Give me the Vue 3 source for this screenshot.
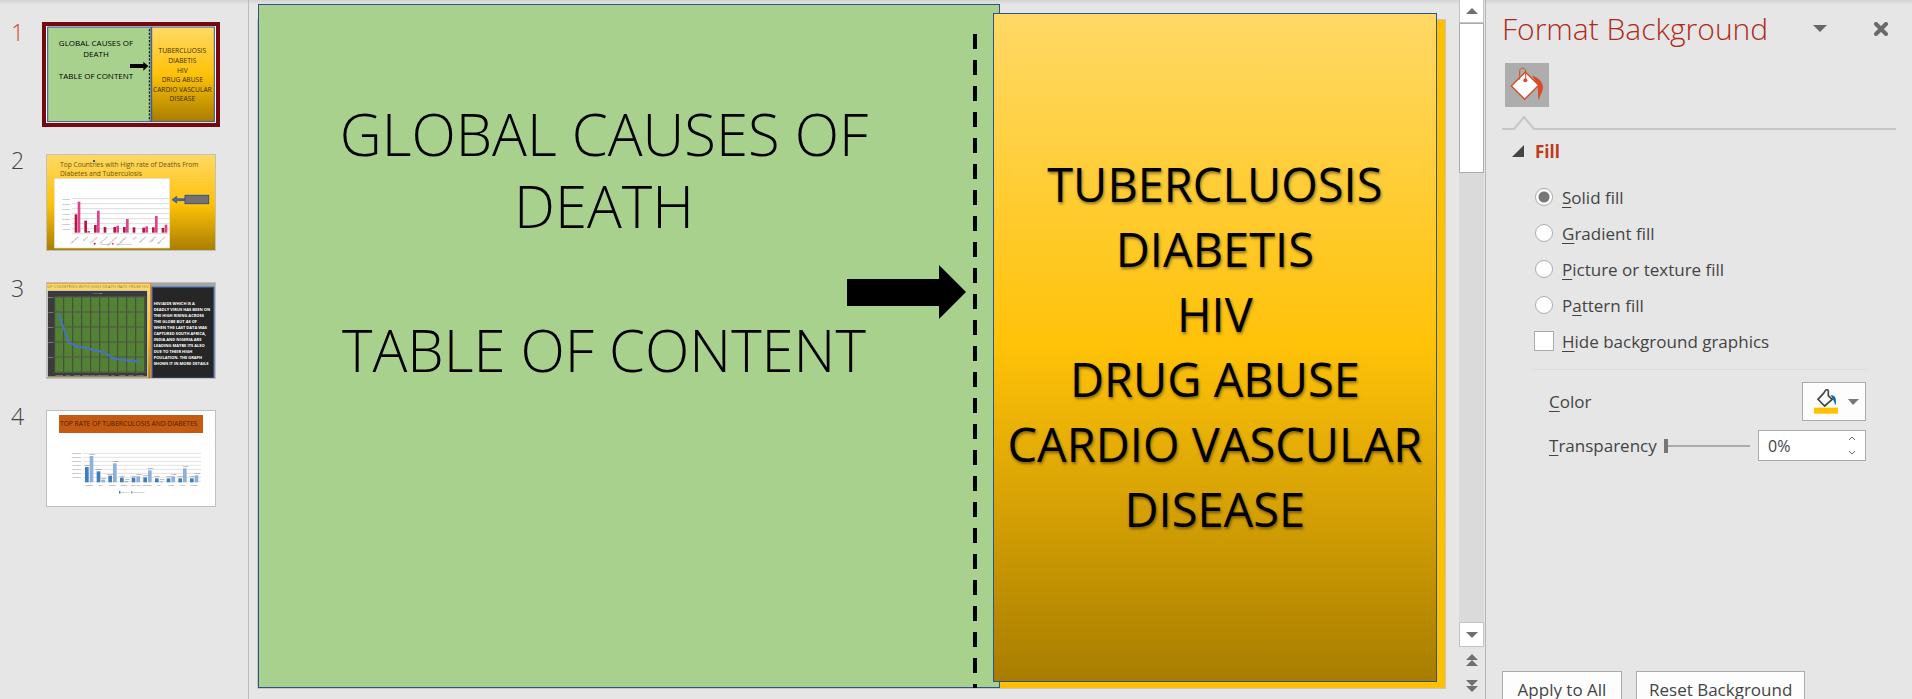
<script setup>
import { ref } from 'vue'

const selected = ref(1)
const fill = ref('solid')
const hideGraphics = ref(false)
const transparency = ref(0)

const fills = [
  { id: 'solid', before: '', key: 'S', after: 'olid fill' },
  { id: 'gradient', before: '', key: 'G', after: 'radient fill' },
  { id: 'picture', before: '', key: 'P', after: 'icture or texture fill' },
  { id: 'pattern', before: 'P', key: 'a', after: 'ttern fill' },
]

const topics = ['TUBERCLUOSIS', 'DIABETIS', 'HIV', 'DRUG ABUSE', 'CARDIO VASCULAR', 'DISEASE']
const topicLines = [82, 112, 142, 169, 198, 226]

const barsTwo = [
  [55, 93], [36, 5], [23, 66], [17, 0], [17, 21], [17, 41], [16, 0], [15, 19], [16, 50], [14, 24],
]
const barsFour = [
  [46, 79], [33, 8], [20, 57], [14, 4], [14, 18], [15, 36], [12, 3], [12, 18], [12, 42], [12, 21],
]
const countries = ['Indonesia', 'Brazil', 'Pakistan', 'Germany', 'South Africa', 'Bangladesh', 'Italy', 'Vietnam', 'Nigeria', 'Myanmar']

const hivNote = [
  'HIV/AIDS WHICH IS A',
  'DEADLY VIRUS HAS BEEN ON',
  'THE HIGH RISING ACROSS',
  'THE GLOBE BUT AS OF',
  'WHEN THE LAST DATA WAS',
  'CAPTURED SOUTH AFRICA,',
  'INDIA AND NIGERIA ARE',
  'LEADING MAYBE ITS ALSO',
  'DUE TO THEIR HIGH',
  'POULATION. THE GRAPH',
  'SHOWS IT IN MORE DETAILS',
]

function step(delta) {
  transparency.value = Math.min(100, Math.max(0, Number(transparency.value) + delta))
}
</script>

<template>
  <div class="workspace">
    <nav class="slides" aria-label="Slides">
      <button
        v-for="n in 4"
        :key="n"
        class="slide-item"
        :class="{ selected: selected === n }"
        type="button"
        @click="selected = n"
      >
        <span class="slide-number">{{ n }}</span>
        <span class="frame">
          <svg v-if="n === 1" viewBox="0 0 510 291" class="thumb">
            <defs>
              <linearGradient id="goldOne" x1="0" y1="0" x2="0" y2="1">
                <stop offset="0" stop-color="#ffd966" />
                <stop offset=".5" stop-color="#ffc208" />
                <stop offset="1" stop-color="#a87d00" />
              </linearGradient>
            </defs>
            <rect width="510" height="291" fill="#fff" />
            <rect x="5" y="3" width="310" height="284" fill="#a9d18e" stroke="#2f528f" stroke-width="3" />
            <rect x="317" y="3" width="188" height="284" fill="url(#goldOne)" stroke="#2f528f" stroke-width="3" />
            <path d="M310 9V285" stroke="#000" stroke-width="3" stroke-dasharray="7 4" />
            <path d="M252 114h40v-7l15 13-15 14v-8h-40z" />
            <g class="t-title">
              <text x="150" y="59">GLOBAL CAUSES OF</text>
              <text x="150" y="92">DEATH</text>
              <text x="150" y="159">TABLE OF CONTENT</text>
            </g>
            <g class="t-topic">
              <text v-for="(t, i) in topics" :key="t" x="409" :y="topicLines[i]">{{ t }}</text>
            </g>
          </svg>

          <svg v-else-if="n === 2" viewBox="0 0 510 291" class="thumb outlined">
            <defs>
              <linearGradient id="goldTwo" x1="0" y1="0" x2="0" y2="1">
                <stop offset="0" stop-color="#ffd966" />
                <stop offset=".52" stop-color="#ffc208" />
                <stop offset="1" stop-color="#a87d00" />
              </linearGradient>
            </defs>
            <rect width="510" height="291" fill="url(#goldTwo)" />
            <text class="t-two" x="42" y="39">Top Countries with High rate of Deaths From</text>
            <text class="t-two" x="42" y="66">Diabetes and Tuberculosis</text>
            <rect x="141" y="18" width="6" height="6" fill="#2f55a5" />
            <rect x="25" y="74" width="346" height="208" fill="#fff" stroke="#e4dfd0" stroke-width="2" />
            <path v-for="i in 8" :key="i" :d="`M78 ${119 + i * 15}H369`" stroke="#dcdcdc" stroke-width="3" />
            <text v-for="i in 7" :key="'a' + i" class="t-axis" x="72" :y="124 + i * 15">{{ 8 - i }}00000</text>
            <g v-for="(b, i) in barsTwo" :key="'b' + i">
              <rect :x="86 + i * 29" :y="236 - b[0]" width="8" :height="b[0]" fill="#b5173f" />
              <rect :x="95 + i * 29" :y="236 - b[1]" width="8" :height="b[1]" fill="#df4390" />
              <text class="t-axis dark" :transform="`translate(${98 + i * 29} 250) rotate(-42)`">{{ countries[i] }}</text>
            </g>
            <circle cx="146" cy="269" r="3" fill="#b5173f" />
            <circle cx="200" cy="269" r="3" fill="#df4390" />
            <text class="t-axis" x="192" y="272">Diabetes</text>
            <text class="t-axis" x="256" y="272">Tuberculosis</text>
            <path d="M378 137l14-10v7h24v6h-24v7z" fill="#44699b" stroke="#2f528f" stroke-width="2" />
            <rect x="417" y="124" width="71" height="25" fill="#767171" stroke="#2f528f" stroke-width="3" />
          </svg>

          <svg v-else-if="n === 3" viewBox="0 0 510 291" class="thumb outlined">
            <defs>
              <linearGradient id="goldThree" x1="0" y1="0" x2="0" y2="1">
                <stop offset="0" stop-color="#ffd966" />
                <stop offset=".5" stop-color="#ffc208" />
                <stop offset="1" stop-color="#a87d00" />
              </linearGradient>
            </defs>
            <rect width="510" height="291" fill="#a5a5a5" />
            <rect x="0" y="3" width="314" height="288" fill="url(#goldThree)" stroke="#ed7d31" stroke-width="4" />
            <text class="t-three" x="3" y="17">OF COUNTRIES WITH HIGH DEATH RATE FROM HIV</text>
            <rect x="4" y="25" width="301" height="260" fill="#3b3b3b" stroke="#d9d9d9" stroke-width="3" />
            <rect x="26" y="44" width="272" height="228" fill="#548235" />
            <path v-for="i in 11" :key="'v' + i" :d="`M${i * 27 - 1} 44V272`" stroke="#404a3b" stroke-width="3" />
            <path v-for="i in 6" :key="'h' + i" :d="`M22 ${i * 45}H298`" stroke="#505050" stroke-width="3" />
            <text class="t-axis light" x="168" y="37">HIV/AIDS</text>
            <text v-for="i in 5" :key="'y' + i" class="t-axis light" x="21" :y="3 + i * 45">{{ 6 - i }}000</text>
            <text v-for="(c, i) in countries" :key="'c' + i" class="t-tiny" :x="39 + i * 27" y="281">{{ c }}</text>
            <path d="M37 93l31 88 27 13 25 3 27 9 28 4 27 19 27 5 28 3 25 2" fill="none" stroke="#4472c4" stroke-width="6" />
            <rect x="319" y="16" width="184" height="272" fill="#262626" stroke="#2f528f" stroke-width="4" />
            <text v-for="(line, i) in hivNote" :key="line" class="t-note" x="323" :y="70 + i * 18">{{ line }}</text>
          </svg>

          <svg v-else viewBox="0 0 510 291" class="thumb outlined">
            <rect width="510" height="291" fill="#fff" />
            <rect x="39" y="15" width="432" height="54" fill="#c55a11" />
            <text class="t-four" x="42" y="48">TOP RATE OF TUBERCULOSIS AND DIABETES</text>
            <path v-for="i in 8" :key="i" :d="`M112 ${118 + i * 12}H465`" stroke="#e2e2e2" stroke-width="3" />
            <text v-for="i in 7" :key="'a' + i" class="t-axis" x="105" :y="121 + i * 12">{{ 8 - i }}000000</text>
            <g v-for="(b, i) in barsFour" :key="'b' + i">
              <rect :x="117 + i * 35" :y="217 - b[0]" width="11" :height="b[0]" fill="#3d80bd" />
              <rect :x="131 + i * 35" :y="217 - b[1]" width="11" :height="b[1]" fill="#8eb0df" />
              <text class="t-tiny dark" :x="129 + i * 35" y="229">{{ countries[i] }}</text>
              <text class="t-tiny dark" :x="122 + i * 35" :y="214 - b[0]">{{ b[0] }}0000</text>
              <text class="t-tiny dark" :x="138 + i * 35" :y="214 - b[1]">{{ b[1] }}0000</text>
            </g>
            <rect x="219" y="243" width="4" height="8" fill="#3d80bd" />
            <rect x="255" y="243" width="4" height="8" fill="#8eb0df" />
            <text class="t-axis" x="249" y="250">Diabetes</text>
            <text class="t-axis" x="295" y="250">Tuberculosis</text>
          </svg>
        </span>
      </button>
    </nav>

    <main class="canvas">
      <div class="slide">
        <section class="shape green">
          <h1>GLOBAL CAUSES OF<br />DEATH<br /><br />TABLE OF CONTENT</h1>
        </section>
        <svg class="divider" aria-hidden="true"><line x1="2" y1="0" x2="2" y2="100%" /></svg>
        <svg class="arrow" viewBox="0 0 119 54" aria-hidden="true"><path d="M0 14H92V0L119 27 92 54V41H0z" /></svg>
        <section class="shape gold">
          <p v-for="t in topics" :key="t">{{ t }}</p>
        </section>
      </div>
    </main>

    <div class="scrollbar" aria-label="Slide scroll bar">
      <button class="sb up" type="button" aria-label="Scroll up">
        <svg viewBox="0 0 12 6"><path d="M6 0l6 6H0z" /></svg>
      </button>
      <div class="track"><div class="handle"></div></div>
      <button class="sb down" type="button" aria-label="Scroll down">
        <svg viewBox="0 0 12 6"><path d="M0 0h12L6 6z" /></svg>
      </button>
      <button class="jump" type="button" aria-label="Previous slide">
        <svg viewBox="0 0 12 12"><path d="M6 0l6 6H0zM6 6l6 6H0z" /></svg>
      </button>
      <button class="jump" type="button" aria-label="Next slide">
        <svg viewBox="0 0 12 12"><path d="M0 0h12L6 6zM0 6h12l-6 6z" /></svg>
      </button>
    </div>

    <aside class="pane">
      <header class="pane-head">
        <h2>Format Background</h2>
        <div class="pane-tools">
          <button type="button" aria-label="Pane options">
            <svg width="14" height="7" viewBox="0 0 14 7"><path d="M0 0h14L7 7z" fill="#666" /></svg>
          </button>
          <button type="button" aria-label="Close pane">
            <svg width="14" height="14" viewBox="0 0 14 14"><path d="M2 2l10 10M12 2L2 12" stroke="#6a6a6a" stroke-width="4" stroke-linecap="round" /></svg>
          </button>
        </div>
      </header>

      <button class="tab" type="button" aria-label="Fill">
        <svg width="44" height="44" viewBox="0 0 132 132">
          <path d="M81 38c16 4 32 16 33 34 0 14-10 24-12 40-4-8-2-18-3-26-1-6-1-14 0-20z" fill="#d84b26" />
          <path d="M61 27l40 40-42 42-40-40z" fill="#fff" stroke="#d84b26" stroke-width="4" />
          <path d="M44 50V24c0-11 18-11 18 0v27" fill="none" stroke="#d84b26" stroke-width="3" />
          <circle cx="61" cy="52" r="6" fill="#d84b26" />
        </svg>
      </button>
      <div class="rule">
        <svg width="32" height="14" viewBox="0 0 32 14"><path d="M0 13H2L12 1 22 13H32" fill="none" stroke="#c6c6c6" stroke-width="2" /></svg>
        <span></span>
      </div>

      <button class="section" type="button">
        <svg width="12" height="12" viewBox="0 0 12 12"><path d="M12 0v12H0z" fill="#444" /></svg>
        Fill
      </button>

      <div class="body">
        <div class="options" role="radiogroup" aria-label="Fill">
          <label v-for="f in fills" :key="f.id" class="option">
            <input v-model="fill" type="radio" name="fill" :value="f.id" />
            <span>{{ f.before }}<u>{{ f.key }}</u>{{ f.after }}</span>
          </label>
          <label class="option">
            <input v-model="hideGraphics" type="checkbox" />
            <span><u>H</u>ide background graphics</span>
          </label>
        </div>

        <div class="row color-row">
          <label for="color"><u>C</u>olor</label>
          <button id="color" class="color" type="button">
            <svg width="24" height="25" viewBox="0 0 72 75">
              <path d="M50 18c14 0 18 10 15 31-3-5-4-9-6-14z" fill="#1068b3" />
              <path d="M28 14L12 31l20 20 25-22M28 14l6-9c3-5 9-3 9 2v13l12 12" fill="#fff" stroke="#444" stroke-width="5" />
              <rect y="56" width="72" height="18" fill="#ffc000" />
            </svg>
            <svg width="11" height="6" viewBox="0 0 11 6"><path d="M0 0h11L5 6z" fill="#777" /></svg>
          </button>
        </div>

        <div class="row">
          <label for="transparency"><u>T</u>ransparency</label>
          <input id="transparency" v-model="transparency" class="slider" type="range" min="0" max="100" />
          <div class="spin">
            <input type="text" aria-label="Transparency percent" :value="transparency + '%'" />
            <div class="steps">
              <button type="button" aria-label="Increase" @click="step(1)">
                <svg width="8" height="5" viewBox="0 0 8 5"><path d="M1 4l3-3 3 3" /></svg>
              </button>
              <button type="button" aria-label="Decrease" @click="step(-1)">
                <svg width="8" height="5" viewBox="0 0 8 5"><path d="M1 1l3 3 3-3" /></svg>
              </button>
            </div>
          </div>
        </div>
      </div>

      <footer>
        <button type="button">App<u>l</u>y to All</button>
        <button type="button">Reset <u>B</u>ackground</button>
      </footer>
    </aside>
  </div>
</template>

<style>
body {
  overflow: hidden;
}
</style>

<style scoped>
* {
  box-sizing: border-box;
}
.workspace {
  display: grid;
  grid-template-columns: 249px minmax(0, 1fr) 26px 427px;
  height: 100vh;
  overflow: hidden;
  background: linear-gradient(#d4d4d4, #e6e6e6 5px);
  color: #444;
  font-family: "Open Sans", "Noto Sans", sans-serif;
  font-size: 17px;
}
button {
  padding: 0;
  border: 0;
  background: none;
  color: inherit;
  font: inherit;
  cursor: pointer;
}
svg {
  display: block;
}
u {
  text-decoration-thickness: 1px;
  text-underline-offset: 3px;
}

/* slide list */
.slides {
  display: flex;
  flex-direction: column;
  gap: 23px;
  padding: 22px 0 0 11px;
  border-right: 1px solid #bcbcbc;
}
.slide-item {
  display: flex;
  align-items: flex-start;
  text-align: left;
}
.slide-number {
  width: 31px;
  color: #444;
  font-size: 23px;
  font-weight: 300;
  line-height: 20px;
}
.selected .slide-number {
  color: #d24726;
}
.frame {
  width: 178px;
  border: 4px solid transparent;
}
.selected .frame {
  border-color: #750811;
}
.thumb {
  width: 170px;
  height: 97px;
}
.outlined {
  outline: 1px solid #c0c0c0;
  outline-offset: -1px;
}
.t-title {
  font-size: 24px;
  text-anchor: middle;
}
.t-topic {
  font-size: 20px;
  text-anchor: middle;
  fill: #3a2c00;
}
.t-two {
  font-size: 20px;
  fill: #6b5310;
}
.t-three {
  font-size: 13px;
  fill: #8b8b5c;
}
.t-four {
  font-size: 20px;
  fill: #4a1f00;
}
.t-note {
  font-size: 12px;
  font-weight: 700;
  fill: #fff;
}
.t-axis {
  font-size: 7px;
  text-anchor: end;
  fill: #8a8a8a;
}
.t-tiny {
  font-size: 5px;
  text-anchor: middle;
  fill: #ccc;
}
.dark {
  fill: #555;
}
.light {
  fill: #ccc;
}

/* slide canvas */
.canvas {
  display: flex;
  padding: 19px 13px 10px 8px;
}
.slide {
  position: relative;
  flex: 1;
  border: 1px solid #c6c6c6;
  background: #ffc000;
}
.shape {
  position: absolute;
  border: 1px solid #2f528f;
}
.green {
  top: -16px;
  bottom: 0;
  left: 0;
  width: 62.5%;
  padding: 93px 50px 0 0;
  background: #a9d18e;
}
h1 {
  margin: 0;
  color: #000;
  font-size: 58px;
  font-weight: 300;
  line-height: 72px;
  text-align: center;
  white-space: nowrap;
}
.gold {
  top: -7px;
  right: 8px;
  bottom: 6px;
  left: 61.9%;
  padding-top: 138px;
  background: linear-gradient(#ffd966, #ffc208 50%, #a87d00);
}
.gold p {
  margin: 0;
  color: #000;
  font-size: 47px;
  line-height: 65px;
  text-align: center;
  text-shadow: 1px 2px 3px rgba(0, 0, 0, 0.45);
  white-space: nowrap;
}
.divider {
  position: absolute;
  top: 14px;
  left: 60.2%;
  width: 4px;
  height: 654px;
}
.divider line {
  stroke: #000;
  stroke-width: 4;
  stroke-dasharray: 15 11;
}
.arrow {
  position: absolute;
  top: 245px;
  left: 49.6%;
  width: 119px;
}

/* scroll bar */
.scrollbar {
  display: flex;
  flex-direction: column;
  padding-right: 1px;
}
.scrollbar svg {
  width: 12px;
  margin: 0 auto;
  fill: #707070;
}
.sb {
  height: 25px;
  border: 1px solid #c3c3c3;
  background: #fff;
}
.up {
  height: 23px;
  border-top: 0;
}
.track {
  flex: 1;
  background: #dadada;
}
.handle {
  height: 25%;
  border: 1px solid #ababab;
  background: #fff;
}
.jump {
  height: 26px;
}

/* format pane */
.pane {
  display: flex;
  flex-direction: column;
  padding: 0 16px;
  border-left: 1px solid #b5b5b5;
}
.pane-head {
  display: flex;
  align-items: center;
  justify-content: space-between;
  height: 57px;
  padding-right: 8px;
}
.pane-tools {
  display: flex;
  align-items: center;
  gap: 47px;
}
h2 {
  margin: 0;
  color: #b02a1a;
  font-size: 30px;
  font-weight: 300;
  line-height: 40px;
  white-space: nowrap;
}
.tab {
  flex: none;
  width: 44px;
  height: 44px;
  margin: 6px 0 9px 3px;
  background: #adadad;
}
.rule {
  display: flex;
  align-items: flex-end;
  padding-left: 10px;
  background: linear-gradient(#c6c6c6, #c6c6c6) 0 100% / 12px 2px no-repeat;
}
.rule span {
  flex: 1;
  height: 2px;
  background: #c6c6c6;
}
.section {
  display: flex;
  align-items: center;
  gap: 11px;
  height: 24px;
  margin: 9px 0 0 10px;
  color: #c0391b;
  font-weight: 700;
}
.body {
  padding: 16px 30px 0 32px;
}
.options {
  padding-bottom: 10px;
  border-bottom: 1px solid #dcdcdc;
}
.option {
  display: flex;
  align-items: center;
  gap: 8px;
  height: 36px;
}
.option input {
  width: 20px;
  height: 20px;
  margin: 0;
  border: 1px solid #ababab;
  background: #fff;
  appearance: none;
}
.option input[type="radio"] {
  width: 18px;
  height: 18px;
  margin: 0 1px;
  border-radius: 50%;
}
.option input[type="radio"]:checked {
  background: radial-gradient(#777 5px, #fff 6px);
}
.row {
  display: flex;
  align-items: center;
  justify-content: space-between;
  padding-left: 15px;
}
.color-row {
  margin: 12px 0 9px;
}
.color {
  display: flex;
  align-items: center;
  justify-content: center;
  gap: 10px;
  width: 64px;
  height: 39px;
  padding-left: 5px;
  border: 1px solid #ababab;
  background: #fdfdfd;
}
.slider {
  width: 86px;
  height: 14px;
  margin: 0 8px 0 auto;
  background: linear-gradient(#ababab, #ababab) 0 50% / 100% 2px no-repeat;
  appearance: none;
}
.slider::-webkit-slider-thumb {
  width: 4px;
  height: 14px;
  background: #777;
  appearance: none;
}
.spin {
  display: flex;
  width: 108px;
  height: 31px;
  border: 1px solid #ababab;
  background: #fff;
}
.spin input {
  flex: 1;
  width: 0;
  padding: 0 0 0 9px;
  border: 0;
  background: none;
  color: #444;
  font-family: inherit;
  font-size: 16px;
}
.steps {
  display: flex;
  flex-direction: column;
  width: 26px;
}
.steps button {
  display: grid;
  flex: 1;
  place-items: center;
}
.steps path {
  fill: none;
  stroke: #666;
  stroke-width: 1;
}
footer {
  display: flex;
  gap: 14px;
  height: 28px;
  margin-top: auto;
}
footer button {
  flex: none;
  min-width: 120px;
  height: 36px;
  padding: 0 12px;
  border: 1px solid #ababab;
  background: #fdfdfd;
  white-space: nowrap;
}
</style>
